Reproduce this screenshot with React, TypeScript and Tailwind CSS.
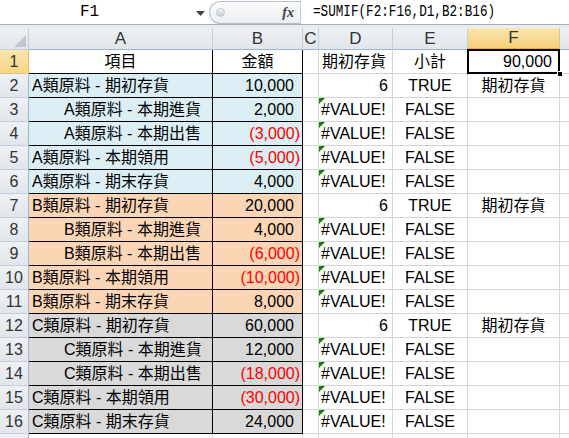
import React from 'react';

type Row = {
  a: string;
  indent?: boolean;
  b: string;
  neg?: boolean;
  d: string;
  e: string;
  f?: string;
  bg: string;
};

const groups = [
  { k: 'A', bg: 'bg-[#daeef3]', v: ['10,000', '2,000', '(3,000)', '(5,000)', '4,000'] },
  { k: 'B', bg: 'bg-[#fcd5b4]', v: ['20,000', '4,000', '(6,000)', '(10,000)', '8,000'] },
  { k: 'C', bg: 'bg-[#d9d9d9]', v: ['60,000', '12,000', '(18,000)', '(30,000)', '24,000'] },
];

const labels = ['期初存貨', '本期進貨', '本期出售', '本期領用', '期末存貨'];

const rows: Row[] = groups.flatMap((g) =>
  labels.map((l, i) => ({
    a: `${g.k}類原料 - ${l}`,
    indent: i === 1 || i === 2,
    b: g.v[i],
    neg: g.v[i].startsWith('('),
    d: i === 0 ? '6' : '#VALUE!',
    e: i === 0 ? 'TRUE' : 'FALSE',
    f: i === 0 ? '期初存貨' : undefined,
    bg: g.bg,
  }))
);

const font = { fontFamily: '"Liberation Sans", "Noto Sans CJK TC", sans-serif' };

function RowHead({ n, active }: { n?: number; active?: boolean }) {
  return (
    <div
      className={
        'w-[29px] shrink-0 h-full flex items-center justify-center text-[16px] border-r border-b ' +
        (active
          ? 'bg-gradient-to-b from-[#fbe6b0] to-[#f7d584] border-r-[#f2b94d] border-b-[#e3c27c] text-[#333]'
          : 'bg-gradient-to-b from-[#eef1f5] to-[#e1e6ec] border-r-[#9eb6ce] border-b-[#c5cdd8] text-[#333]')
      }
    >
      {n}
    </div>
  );
}

export default function App() {
  return (
    <div className="w-[569px] h-[438px] overflow-hidden bg-white text-black" style={font}>
      {/* formula bar */}
      <div className="h-[25px] flex items-center bg-white border-b border-[#a5acb5]">
        <div className="w-[209px] h-full flex items-center relative">
          <span
            className="flex-1 text-center text-[16px] pr-[30px]"
            style={{ fontFamily: '"Liberation Mono", monospace' }}
          >
            F1
          </span>
          <svg className="absolute left-[196px] top-[11px]" width="9" height="5" viewBox="0 0 9 5">
            <path d="M0 0 L9 0 L4.5 5 Z" fill="#444" />
          </svg>
        </div>
        <div className="w-[91px] h-[23px] flex items-center rounded-l-full border border-r-0 border-[#b9bec5] bg-gradient-to-b from-[#fafbfc] to-[#eceff2]">
          <div className="ml-[6px] w-[9px] h-[9px] rounded-full bg-gradient-to-b from-[#f4f4f4] to-[#c9cdd2] border border-[#c2c6cb]" />
          <span
            className="ml-auto mr-[6px] text-[14px] italic font-bold text-[#444]"
            style={{ fontFamily: '"Liberation Serif", serif' }}
          >
            fx
          </span>
        </div>
        <div className="w-px h-full bg-[#c5cad0]" />
        <div
          className="ml-[12px] text-[16px] whitespace-nowrap origin-left scale-x-[0.79]"
          style={{ fontFamily: '"Liberation Mono", monospace' }}
        >
          =SUMIF(F2:F16,D1,B2:B16)
        </div>
      </div>
      <div className="h-[3px] bg-[#e9edf2]" />

      {/* column headers */}
      <div className="h-[22px] flex text-[17px] text-[#333]">
        <div className="w-[29px] shrink-0 h-full bg-gradient-to-b from-[#eef1f5] to-[#e1e6ec] border-r border-b border-[#c5cdd8] relative">
          <svg className="absolute right-[2px] bottom-[2px]" width="12" height="12" viewBox="0 0 12 12">
            <path d="M12 0 L12 12 L0 12 Z" fill="#c3c8ce" />
          </svg>
        </div>
        {[
          ['A', 'w-[184px]'],
          ['B', 'w-[90px]'],
          ['C', 'w-[16px]'],
          ['D', 'w-[74px]'],
          ['E', 'w-[75px]'],
        ].map(([l, w]) => (
          <div
            key={l}
            className={`${w} shrink-0 h-full flex items-center justify-center bg-gradient-to-b from-[#eef1f5] to-[#e1e6ec] border-r border-b border-r-[#c5cdd8] border-b-[#9eb6ce]`}
          >
            {l}
          </div>
        ))}
        <div className="w-[92px] shrink-0 h-full flex items-center justify-center bg-gradient-to-b from-[#fbe6b0] to-[#f6cf78] border-r border-b-2 border-r-[#e3c27c] border-b-[#f2a93b]">
          F
        </div>
        <div className="flex-1 h-full bg-gradient-to-b from-[#eef1f5] to-[#e1e6ec] border-b border-[#9eb6ce]" />
      </div>

      {/* row 1 */}
      <div className="h-[24px] flex text-[16px]">
        <RowHead n={1} active />
        <div className="w-[184px] shrink-0 h-full flex items-center justify-center border-r border-b border-black">項目</div>
        <div className="w-[90px] shrink-0 h-full flex items-center justify-center border-r border-b border-black">金額</div>
        <div className="w-[16px] shrink-0 h-full border-r border-b border-[#d4d4d4]" />
        <div className="w-[74px] shrink-0 h-full flex items-center pl-[3px] border-r border-b border-[#d4d4d4]">期初存貨</div>
        <div className="w-[75px] shrink-0 h-full flex items-center justify-center border-r border-b border-[#d4d4d4]">小計</div>
        <div className="w-[92px] shrink-0 h-full relative border-r border-b border-[#d4d4d4]">
          <div className="absolute left-[-1px] top-[-1px] right-[-1px] bottom-[-1px] border-2 border-black flex items-center justify-end pr-[6px]">
            90,000
          </div>
          <div className="absolute right-[-4px] bottom-[-4px] w-[6px] h-[6px] bg-black border border-white" />
        </div>
        <div className="flex-1 h-full border-b border-[#d4d4d4]" />
      </div>

      {rows.map((r, i) => (
        <div key={i} className="h-[24px] flex text-[16px]">
          <RowHead n={i + 2} />
          <div
            className={`w-[184px] shrink-0 h-full flex items-center whitespace-nowrap border-r border-b border-black ${r.bg} ${r.indent ? 'pl-[35px]' : 'pl-[3px]'}`}
          >
            {r.a}
          </div>
          <div
            className={`w-[90px] shrink-0 h-full flex items-center justify-end border-r border-b border-black ${r.bg} ${r.neg ? 'pr-[2px] text-[#ff0000]' : 'pr-[8px]'}`}
          >
            {r.b}
          </div>
          <div className="w-[16px] shrink-0 h-full border-r border-b border-[#d4d4d4]" />
          <div
            className={`w-[74px] shrink-0 h-full flex items-center relative border-r border-b border-[#d4d4d4] ${r.d === '6' ? 'justify-end pr-[4px]' : 'pl-[2px]'}`}
          >
            {r.d !== '6' && (
              <svg className="absolute left-0 top-0" width="6" height="6" viewBox="0 0 6 6">
                <path d="M0 0 L6 0 L0 6 Z" fill="#108010" />
              </svg>
            )}
            <span className="whitespace-nowrap">{r.d}</span>
          </div>
          <div className="w-[75px] shrink-0 h-full flex items-center justify-center border-r border-b border-[#d4d4d4]">
            {r.e}
          </div>
          <div className="w-[92px] shrink-0 h-full flex items-center justify-center border-r border-b border-[#d4d4d4]">
            {r.f}
          </div>
          <div className="flex-1 h-full border-b border-[#d4d4d4]" />
        </div>
      ))}

      {/* row 17, only a sliver is visible */}
      <div className="h-[24px] flex text-[16px]">
        <RowHead />
        <div className="w-[184px] shrink-0 h-full border-r border-[#d4d4d4]" />
        <div className="w-[90px] shrink-0 h-full border-r border-[#d4d4d4]" />
        <div className="w-[16px] shrink-0 h-full border-r border-[#d4d4d4]" />
        <div className="w-[74px] shrink-0 h-full border-r border-[#d4d4d4]" />
        <div className="w-[75px] shrink-0 h-full border-r border-[#d4d4d4]" />
        <div className="w-[92px] shrink-0 h-full border-r border-[#d4d4d4]" />
      </div>
    </div>
  );
}
